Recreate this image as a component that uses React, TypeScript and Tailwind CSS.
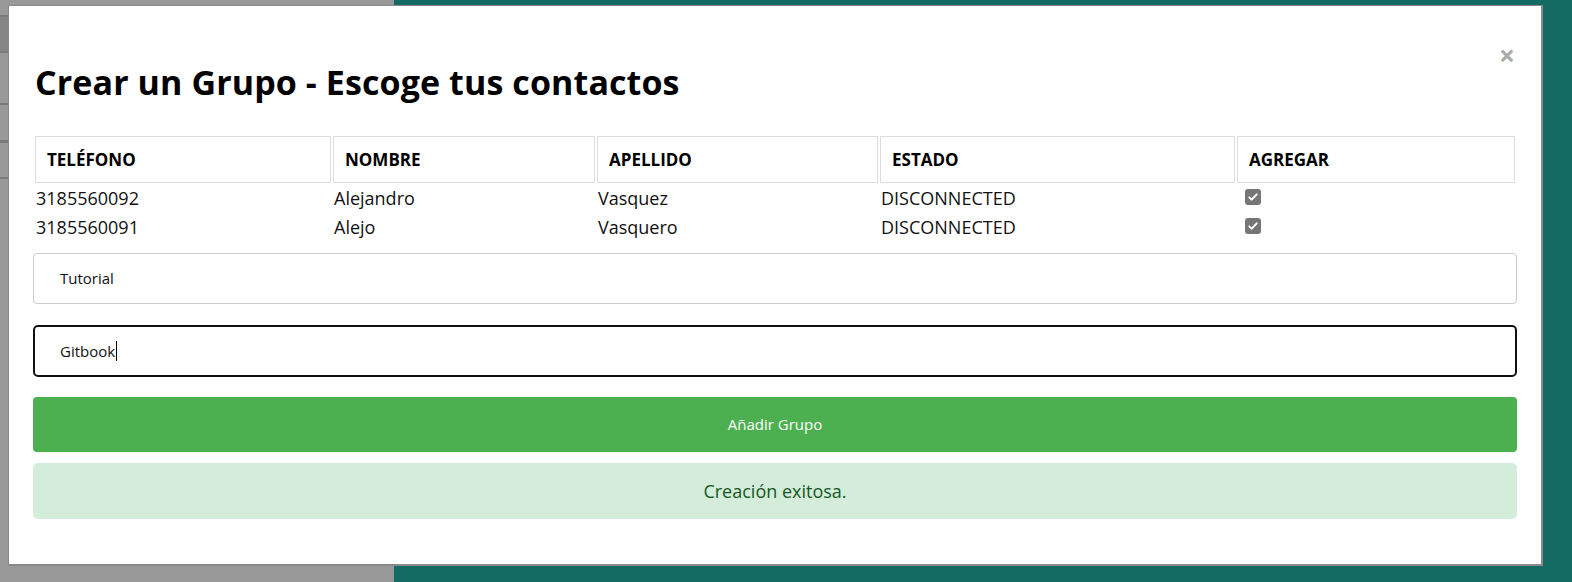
import React from "react";

const contactos = [
  { telefono: "3185560092", nombre: "Alejandro", apellido: "Vasquez", estado: "DISCONNECTED" },
  { telefono: "3185560091", nombre: "Alejo", apellido: "Vasquero", estado: "DISCONNECTED" },
];

function CheckMark() {
  return (
    <span className="mt-[3px] ml-[7px] flex h-[16px] w-[16px] items-center justify-center rounded-[3px] bg-[#767676]">
      <svg viewBox="0 0 16 16" className="h-[12px] w-[12px]" fill="none" stroke="white" strokeWidth="2.6" strokeLinecap="round" strokeLinejoin="round">
        <path d="M3 8.5l3.2 3L13 4.5" />
      </svg>
    </span>
  );
}

export default function App() {
  return (
    <div className="relative flex h-[582px] w-full overflow-hidden font-['Open_Sans',sans-serif]">
      {/* fondo de la página detrás del modal */}
      <div className="flex w-[394px] flex-col bg-[#999999]">
        <div className="mt-[15px] h-[2px] w-[8px] bg-[#7a7a7a]" />
        <div className="h-[34px] w-[8px] bg-[#858585]" />
        <div className="h-[2px] w-[8px] bg-[#7a7a7a]" />
        <div className="mt-[50px] h-[2px] w-[8px] bg-[#7a7a7a]" />
        <div className="mt-[35px] h-[3px] w-[8px] bg-[#7a7a7a]" />
        <div className="mt-[34px] h-[2px] w-[8px] bg-[#7a7a7a]" />
      </div>
      <div className="flex-1 bg-[#136b63]" />

      {/* modal */}
      <div className="absolute left-[8px] top-[5px] h-[561px] w-[1535px] border border-r-2 border-b-2 border-[#8a8a8a] bg-white px-[24px] pt-[53px]">
        <span className="absolute right-[26px] top-[35px] text-[28px] font-bold leading-none text-[#aaaaaa]">×</span>

        <h2 className="pl-[2px] text-[34px] font-bold leading-[46px] tracking-[0.1px] text-black">
          Crear un Grupo - Escoge tus contactos
        </h2>

        <table className="mt-[29px] w-[1484px] table-fixed border-separate border-spacing-[2px] text-[18px] leading-[25px] text-[#111]">
          <colgroup>
            <col className="w-[296px]" />
            <col className="w-[262px]" />
            <col className="w-[281px]" />
            <col className="w-[355px]" />
            <col />
          </colgroup>
          <thead>
            <tr>
              {["TELÉFONO", "NOMBRE", "APELLIDO", "ESTADO", "AGREGAR"].map((h) => (
                <th key={h} className="h-[47px] border border-[#dddddd] px-[11px] text-left text-[17px] font-bold text-black">
                  {h}
                </th>
              ))}
            </tr>
          </thead>
          <tbody>
            {contactos.map((c) => (
              <tr key={c.telefono}>
                <td className="h-[27px] p-px">{c.telefono}</td>
                <td className="p-px">{c.nombre}</td>
                <td className="p-px">{c.apellido}</td>
                <td className="p-px">{c.estado}</td>
                <td className="p-px align-top">
                  <CheckMark />
                </td>
              </tr>
            ))}
          </tbody>
        </table>

        <div className="mt-[10px] flex h-[51px] w-[1484px] items-center rounded-[4px] border border-[#cccccc] pl-[26px] text-[15px] text-[#111]">
          Tutorial
        </div>

        <div className="mt-[21px] flex h-[52px] w-[1484px] items-center rounded-[5px] border-2 border-[#111] pl-[25px] text-[15px] text-[#111]">
          Gitbook<span className="ml-px h-[20px] w-px bg-black" />
        </div>

        <div className="mt-[20px] flex h-[55px] w-[1484px] items-center justify-center rounded-[4px] bg-[#4caf50] text-[15px] text-white">
          Añadir Grupo
        </div>

        <div className="mt-[11px] flex h-[56px] w-[1484px] items-center justify-center rounded-[5px] bg-[#d4edda] text-[18px] text-[#155724]">
          Creación exitosa.
        </div>
      </div>
    </div>
  );
}
